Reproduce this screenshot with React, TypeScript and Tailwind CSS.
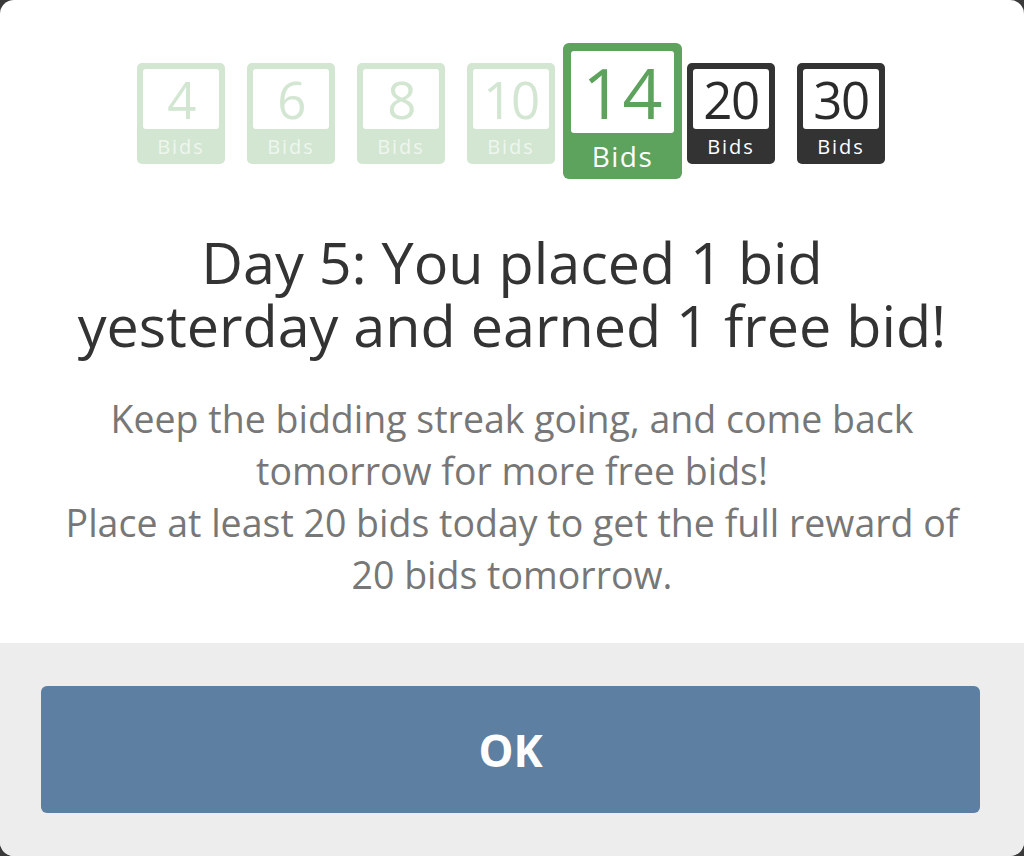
import React from "react";

type BadgeProps = { n: string; variant: "done" | "current" | "future" };

function Badge({ n, variant }: BadgeProps) {
  if (variant === "current") {
    return (
      <div className="w-[119px] h-[136px] bg-[#5da25d] rounded-[6px] pt-[8px] px-[8px] flex flex-col ml-[-14px] mr-[-17px]">
        <div className="h-[82px] bg-white rounded-[3px] flex items-center justify-center text-[#5da25d] text-[70px] leading-none">
          {n}
        </div>
        <div className="flex-1 flex items-center justify-center text-white text-[28px] tracking-[1.5px] leading-none">
          Bids
        </div>
      </div>
    );
  }
  const bg = variant === "done" ? "bg-[#d2e6d2]" : "bg-[#333333]";
  const fg = variant === "done" ? "text-[#d2e6d2]" : "text-[#2b2b2b]";
  const lbl = variant === "done" ? "text-[#eef6ee]" : "text-white";
  return (
    <div className={`w-[88px] h-[101px] mt-[20px] ${bg} rounded-[5px] pt-[6px] px-[6px] flex flex-col`}>
      <div className={`h-[60px] bg-white rounded-[3px] flex items-center justify-center ${fg} text-[51px] leading-none tracking-[-1.5px]`}>
        {n}
      </div>
      <div className={`flex-1 flex items-center justify-center ${lbl} text-[20px] tracking-[2px] leading-none`}>
        Bids
      </div>
    </div>
  );
}

export default function App() {
  return (
    <div
      className="w-[1024px] h-[856px] bg-[#3a3a3a]"
      style={{ fontFamily: '"Open Sans", "Noto Sans", sans-serif' }}
    >
      <div className="w-full h-full bg-white rounded-[14px] overflow-hidden flex flex-col">
        <div className="flex-1 flex flex-col items-center pt-[43px]">
          <div className="flex items-start gap-[22px] h-[136px] pr-[2px]">
            <Badge n="4" variant="done" />
            <Badge n="6" variant="done" />
            <Badge n="8" variant="done" />
            <Badge n="10" variant="done" />
            <Badge n="14" variant="current" />
            <Badge n="20" variant="future" />
            <Badge n="30" variant="future" />
          </div>
          <h1 className="mt-[52px] text-center text-[#333333] text-[57.5px] leading-[63px] font-normal whitespace-nowrap">
            <span className="block">Day 5: You placed 1 bid</span>
            <span className="block">yesterday and earned 1 free bid!</span>
          </h1>
          <div className="mt-[36px] text-center text-[#777777] text-[37.5px] leading-[52px] whitespace-nowrap">
            <p>
              <span className="block">Keep the bidding streak going, and come back</span>
              <span className="block">tomorrow for more free bids!</span>
            </p>
            <p>
              <span className="block">Place at least 20 bids today to get the full reward of</span>
              <span className="block">20 bids tomorrow.</span>
            </p>
          </div>
        </div>
        <div className="h-[213px] bg-[#ededed] pt-[43px] pb-[43px] pl-[41px] pr-[44px]">
          <button className="w-full h-full bg-[#5d7fa1] rounded-[6px] flex items-center justify-center text-white text-[44px] font-bold leading-none">
            OK
          </button>
        </div>
      </div>
    </div>
  );
}
